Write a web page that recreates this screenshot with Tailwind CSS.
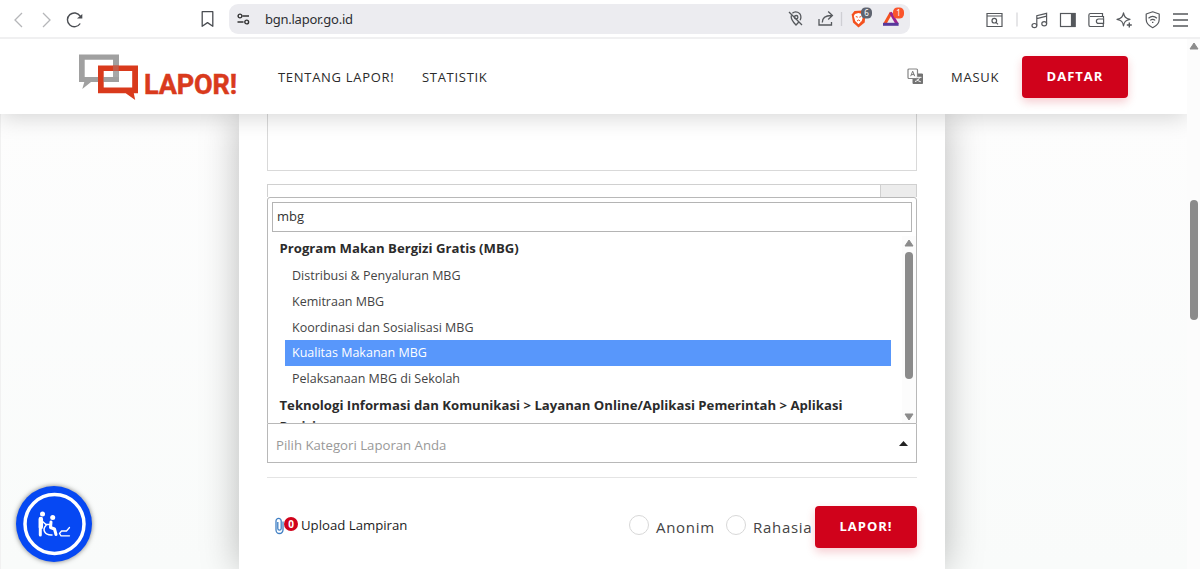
<!DOCTYPE html>
<html lang="id">
<head>
<meta charset="utf-8">
<title>LAPOR!</title>
<script src="https://cdn.jsdelivr.net/npm/@tailwindcss/browser@4"></script>
</head>
<body class="w-[1200px] h-[569px] overflow-hidden flex flex-col bg-white font-['Open_Sans',sans-serif] text-[#333]">

<!-- Browser toolbar -->
<div class="relative z-30 bg-white h-[39px] shrink-0 border-b-2 border-[#f0f0f1] flex items-center text-[#55585c]">
  <svg class="ml-[8px] w-[84px] h-[36px] shrink-0" viewBox="8 0 84 36" fill="none" stroke-width="1.3">
    <path d="M22 12l-7 7 7 7M43 12l7 7-7 7" stroke="#b5b6b9"/>
    <path d="M80.2 15.2A6.9 6.9 0 1 0 80.2 22.5" stroke="#4a4d52" stroke-width="1.4"/>
    <path d="M77 17.500h5.300v-4.500z" fill="#4a4d52"/>
  </svg>
  <svg class="ml-[109px] w-[13px] h-[18px] shrink-0" viewBox="0 0 13 18" fill="none" stroke="#4a4d52" stroke-width="1.3"><path d="M1.2 1.7h10.6v14.6L6.5 12.6 1.2 16.3z" stroke-linejoin="round"/></svg>
  <div class="ml-[15px] w-[681px] h-[30px] rounded-[9px] bg-[#ececf0] flex items-center shrink-0">
    <svg class="ml-[8px] w-[13px] h-[12px]" viewBox="0 0 13 12" fill="none" stroke="#333" stroke-width="1.4"><circle cx="3" cy="3" r="1.9"/><path d="M5.5 3H12M.5 9H6.5"/><circle cx="9.7" cy="9" r="1.9"/></svg>
    <span class="ml-[15px] w-[520px] font-['Noto_Sans',sans-serif] text-[13px] leading-[18px] text-[#2c2f33] tracking-[-0.25px]">bgn.lapor.go.id</span>
    <svg class="w-[122px] h-[30px] shrink-0" viewBox="785 4 122 30" fill="none" stroke="#55585c" stroke-width="1.3">
      <path d="M789 12l13 13M791.2 15.5c-.5 4 2.3 7 4.8 9.5 1-1 2-2 2.8-3.2M792.4 13.2c2.8-2.8 8.5-1.1 8.5 4 0 1-.3 2-.8 3"/><circle cx="796.2" cy="17.2" r="1.7"/>
      <path d="M819 19v6h12.500v-3M822.300 22.500c0-4 3-7 9-7M828.200 11.500l4.200 4-4.200 4"/>
      <path d="M841.5 12v14" stroke="#cfcfd4"/>
      <path d="M854.500 11l8-.5 3 3-.8 9-6.200 5-5.500-5-1.300-8z" fill="#f4511e" stroke="none"/>
      <path d="M855 14l3.500-1 3.700 1 1 2-1.500 5-3.200 3.300-3.300-3.300-1.400-5z" fill="#fff" stroke="none"/>
      <path d="M855.8 16.500l2 .7M861.300 16.500l-2 .7M857 21l1.600-1 1.600 1" stroke="#f4511e" stroke-width="1"/>
      <rect x="861" y="7.500" width="11" height="11" rx="4.500" fill="#5f6470" stroke="none"/>
      <text x="866.500" y="16" font-size="8" text-anchor="middle" fill="#fff" stroke="none" font-family="Noto Sans">6</text>
      <path d="M891.200 12.500l-6.600 11.700" stroke="#f4511e" stroke-width="3"/>
      <path d="M890.500 12.500l6.800 11.700" stroke="#9b2390" stroke-width="3"/>
      <path d="M883 24.300h15.600" stroke="#57389c" stroke-width="3"/>
      <rect x="893" y="7.500" width="11" height="11" rx="4.500" fill="#fb542b" stroke="none"/>
      <text x="898.500" y="16" font-size="8" text-anchor="middle" fill="#fff" stroke="none" font-family="Noto Sans">1</text>
    </svg>
  </div>
  <svg class="ml-[70px] w-[220px] h-[36px] shrink-0" viewBox="980 0 220 36" fill="none" stroke="#55585c" stroke-width="1.2">
    <path d="M987 12.500h15v13h-15zM987 15h15"/><circle cx="994.300" cy="19.700" r="2.300"/><path d="M996 21.300l2 2"/>
    <path d="M1017 11.500v14" stroke="#d5d5d9"/>
    <ellipse cx="1034.400" cy="24.600" rx="2.400" ry="2.100"/><ellipse cx="1044.200" cy="22.700" rx="2.400" ry="2.100"/><path d="M1036.800 24.600v-9.900l9.800-2.400v10.400M1036.800 17.600l9.800-2.400"/>
    <rect x="1060.500" y="12.500" width="14.500" height="13"/><path d="M1071.500 12.500h3.500v13h-3.500z" fill="#55585c"/>
    <path d="M1102.500 15.500v-3h-12a1.600 1.600 0 0 0-1.600 1.600v9.800a1.600 1.600 0 0 0 1.600 1.600h12.800v-3M1090 15.500h13.500v2.300"/><path d="M1103.600 18h-5a2 2 0 0 0 0 4.400h5z"/>
    <path d="M1123.500 11.800c.8 4 2 5.600 6.500 6.500-4.500 .9-5.700 2.500-6.500 6.500-.8-4-2-5.600-6.500-6.500 4.500-.9 5.700-2.500 6.500-6.500z" stroke-linejoin="round"/><path d="M1129.300 21.500v5M1126.800 24h5" stroke-width="1.400"/>
    <path d="M1152.700 10.800l6.500 2.200v5.500c0 3.500-2.500 6.300-6.500 8.200-4-1.900-6.500-4.700-6.500-8.200V13z" stroke-linejoin="round"/><path d="M1148.500 17.200c2.500-2.200 5.900-2.200 8.400 0M1150.200 19.400c1.500-1.300 3.500-1.300 5 0M1152 21.400h1.400"/>
    <path d="M1173 13h15M1173 19h15M1173 25h15" stroke-width="1.400"/>
  </svg>
</div>

<div class="flex h-[530px]">
  <div class="w-[1187px] flex flex-col shrink-0 overflow-hidden">
    <!-- Site header -->
    <header class="relative z-10 h-[75px] shrink-0 bg-white shadow-[0_3px_22px_rgba(0,0,0,0.17)] flex items-center">
      <svg class="ml-[79px] w-[160px] h-[48px] shrink-0" viewBox="79 52 160 48">
        <path d="M79 53.500h40v27.500H91l-8.700 7 2-7H79zM84.700 58.800v17.200h28.300V58.800z" fill="#a0a0a0" fill-rule="evenodd"/>
        <path d="M98 64.500h40v27.700h-4.200l1.400 6.800-9.500-6.800H98zM103.700 70v16.400h28.500V70z" fill="#d93a1c" fill-rule="evenodd"/>
        <path d="M113 70h5.700v6H113z" fill="#a8a8a8"/><path d="M103.700 76h15v5h-15z" fill="#a0a0a0"/><path d="M113 65h5.700v5H113z" fill="#c25b49"/>
        <text x="144" y="92.500" font-family="Roboto" font-weight="700" font-size="27" textLength="93" lengthAdjust="spacing" fill="#d93a1c" stroke="#d93a1c" stroke-width=".5">LAPOR!</text>
      </svg>
      <nav class="ml-[39px] flex text-[13px] leading-[18px] font-medium tracking-[0.7px] text-[#2b2b2b]">
        <a class="w-[144px] whitespace-nowrap">TENTANG LAPOR!</a>
        <a class="w-[90px]">STATISTIK</a>
      </nav>
      <svg class="ml-[395px] w-[17px] h-[17px]" viewBox="0 0 17 17"><path d="M6 6h9.500v9.500H6z" fill="#737373" stroke="#737373" stroke-linejoin="round"/><rect x="1" y="1" width="9.500" height="9.500" rx="1" fill="#fff" stroke="#858585" stroke-width="1.200"/><path d="M3.700 8.200l2-5 2 5M4.400 6.600h2.700" fill="none" stroke="#777"/><path d="M8 13.500c2-.5 4-2 4.500-4M10 9.300h4.500M9.800 11.500c1 1 2.200 1.800 4 2.300" fill="none" stroke="#fff"/></svg>
      <a class="ml-[27px] w-[71px] text-[13px] leading-[18px] font-medium tracking-[0.75px] text-[#2b2b2b]">MASUK</a>
      <button class="w-[106px] h-[42px] rounded-[4px] bg-[#d0021b] text-white text-[13px] font-bold tracking-[1px] shadow-[0_4px_10px_rgba(208,2,27,0.2)]">DAFTAR</button>
    </header>

    <!-- Form -->
    <main class="h-[455px] bg-linear-to-b from-[#fdfdfd] to-[#f9fbfa] border-l border-[#f1f1f1] flex">
      <section class="ml-[238px] w-[706px] px-[28px] bg-white shadow-[0_0_36px_rgba(0,0,0,0.27)] flex flex-col">
        <div class="h-[57px] w-[650px] shrink-0 border border-t-0 border-[#d9d9d9]"></div>
        <div class="mt-[13px] h-[13px] shrink-0 border border-b-0 border-[#d0d0d0] flex justify-end"><div class="w-[36px] bg-[#ececec] border-l border-[#d0d0d0]"></div></div>
        <div class="h-[227px] shrink-0 border border-[#b8b8b8] rounded-t-[3px] bg-white flex flex-col overflow-hidden">
          <div class="mx-[4px] mt-[4px] h-[30px] shrink-0 border border-[#b4b4b4] px-[4px] text-[13px] leading-[27px]">mbg</div>
          <div class="mt-[4px] h-[187px] shrink-0 flex overflow-hidden">
            <div class="w-[623px] pl-[11.500px] text-[13.170px] leading-[26px] text-[#444]">
              <div class="font-bold text-[#2b2b2b] h-[27px] leading-[24px]">Program Makan Bergizi Gratis (MBG)</div>
              <ul class="ml-[5.500px] text-[12.500px] leading-[25.800px]">
                <li class="pl-[7px]">Distribusi &amp; Penyaluran MBG</li>
                <li class="pl-[7px]">Kemitraan MBG</li>
                <li class="pl-[7px]">Koordinasi dan Sosialisasi MBG</li>
                <li class="pl-[7px] bg-[#5897fb] text-white">Kualitas Makanan MBG</li>
                <li class="pl-[7px]">Pelaksanaan MBG di Sekolah</li>
              </ul>
              <div class="mt-[3px] font-bold text-[#2b2b2b] leading-[21px]">Teknologi Informasi dan Komunikasi &gt; Layanan Online/Aplikasi Pemerintah &gt; Aplikasi Perizinan</div>
            </div>
            <div class="ml-auto w-[14px] bg-[#fcfcfc] flex flex-col items-center">
              <svg class="mt-[3px] w-[10px] h-[8px] shrink-0" viewBox="0 0 10 8"><path d="M5 1L9 7H1z" fill="#8b8b8b" stroke="#8b8b8b" stroke-linejoin="round"/></svg>
              <div class="mt-[5px] w-[8px] h-[127px] rounded-full bg-[#8b8b8b] shrink-0"></div>
              <svg class="mt-[34px] w-[10px] h-[8px] shrink-0" viewBox="0 0 10 8"><path d="M5 7L9 1H1z" fill="#8b8b8b" stroke="#8b8b8b" stroke-linejoin="round"/></svg>
            </div>
          </div>
        </div>
        <div class="h-[39px] shrink-0 border border-t-0 border-[#b8b8b8] flex items-center justify-between pl-[8px] pr-[8px] text-[13.200px] text-[#999]"><span class="pt-[5px]">Pilih Kategori Laporan Anda</span><svg class="w-[9px] h-[5px]" viewBox="0 0 9 5"><path d="M0 5L4.500 0 9 5z" fill="#222"/></svg></div>
        <hr class="mt-[14px] border-t border-[#e4e4e4]">
        <div class="mt-[28px] h-[42px] flex items-center">
          <svg class="ml-[8px] w-[9px] h-[18px] shrink-0 mb-[2px]" viewBox="0 0 9 18" fill="none" stroke="#3f7fc4" stroke-width="1.300"><path d="M2.800 5v6.500a1.700 1.700 0 0 0 3.400 0V4A2.400 2.400 0 0 0 1 4v9a3.500 3.500 0 0 0 7 0V4.500"/></svg>
          <span class="mb-[7px] w-[14px] h-[14px] rounded-full bg-[#d0021b] text-white text-[10px] leading-[14px] font-bold text-center">0</span>
          <span class="ml-[3px] mb-[2px] text-[13.200px] text-[#1c1c1c] w-[328px]">Upload Lampiran</span>
          <span class="mb-[5px] w-[20px] h-[20px] shrink-0 rounded-full border border-[#d8d8d8]"></span>
          <span class="ml-[7px] w-[70px] shrink-0 text-[15px] tracking-[0.700px] text-[#444]">Anonim</span>
          <span class="mb-[5px] w-[20px] h-[20px] shrink-0 rounded-full border border-[#d8d8d8]"></span>
          <span class="ml-[7px] text-[15px] tracking-[0.700px] text-[#444]">Rahasia</span>
          <button class="ml-auto w-[102px] h-[42px] shrink-0 rounded-[4px] bg-[#d0021b] text-white text-[13px] font-bold tracking-[1px] shadow-[0_4px_10px_rgba(208,2,27,0.2)]">LAPOR!</button>
        </div>
      </section>
    </main>
  </div>
  <!-- Page scrollbar -->
  <div class="w-[13px] bg-[#fcfcfc] flex flex-col items-center">
    <svg class="mt-[3px] w-[10px] h-[8px]" viewBox="0 0 10 8"><path d="M5 1L9 7H1z" fill="#8b8b8b" stroke="#8b8b8b" stroke-linejoin="round"/></svg>
    <div class="mt-[150px] w-[8px] h-[120px] rounded-full bg-[#8b8b8b]"></div>
  </div>
</div>

<!-- Floating accessibility button -->
<div class="fixed z-20 left-[16px] top-[486px] w-[76px] h-[76px] rounded-full bg-[#0648f3] shadow-[0_0_5px_rgba(0,0,0,0.5)]">
  <svg class="w-full h-full" viewBox="16 486 76 76" fill="none" stroke="#fff" stroke-linecap="round" stroke-linejoin="round">
    <circle cx="54.500" cy="524" r="29.500" stroke-width="3.500"/>
    <circle cx="42.500" cy="514" r="2.500" fill="#fff" stroke="none"/><path d="M40.800 519v8" stroke-width="4.500"/><path d="M40.300 527v8" stroke-width="3"/><path d="M42 521l4 3.500" stroke-width="1.500"/>
    <circle cx="52.700" cy="517.500" r="2.500" fill="#fff" stroke="none"/><path d="M51 522l-.500 5.500 4 1.500 1.500 5.500" stroke-width="3"/><path d="M46 524.500h4" stroke-width="1.500"/>
    <path d="M46 525.500c-4 4-1.500 10 6 9.500" stroke-width="1.500"/>
    <path d="M69.500 527.500l-3 3.500h-5l-2 2.500 1.500 2.300h8.500" stroke-width="1.300"/>
  </svg>
</div>
</body>
</html>
